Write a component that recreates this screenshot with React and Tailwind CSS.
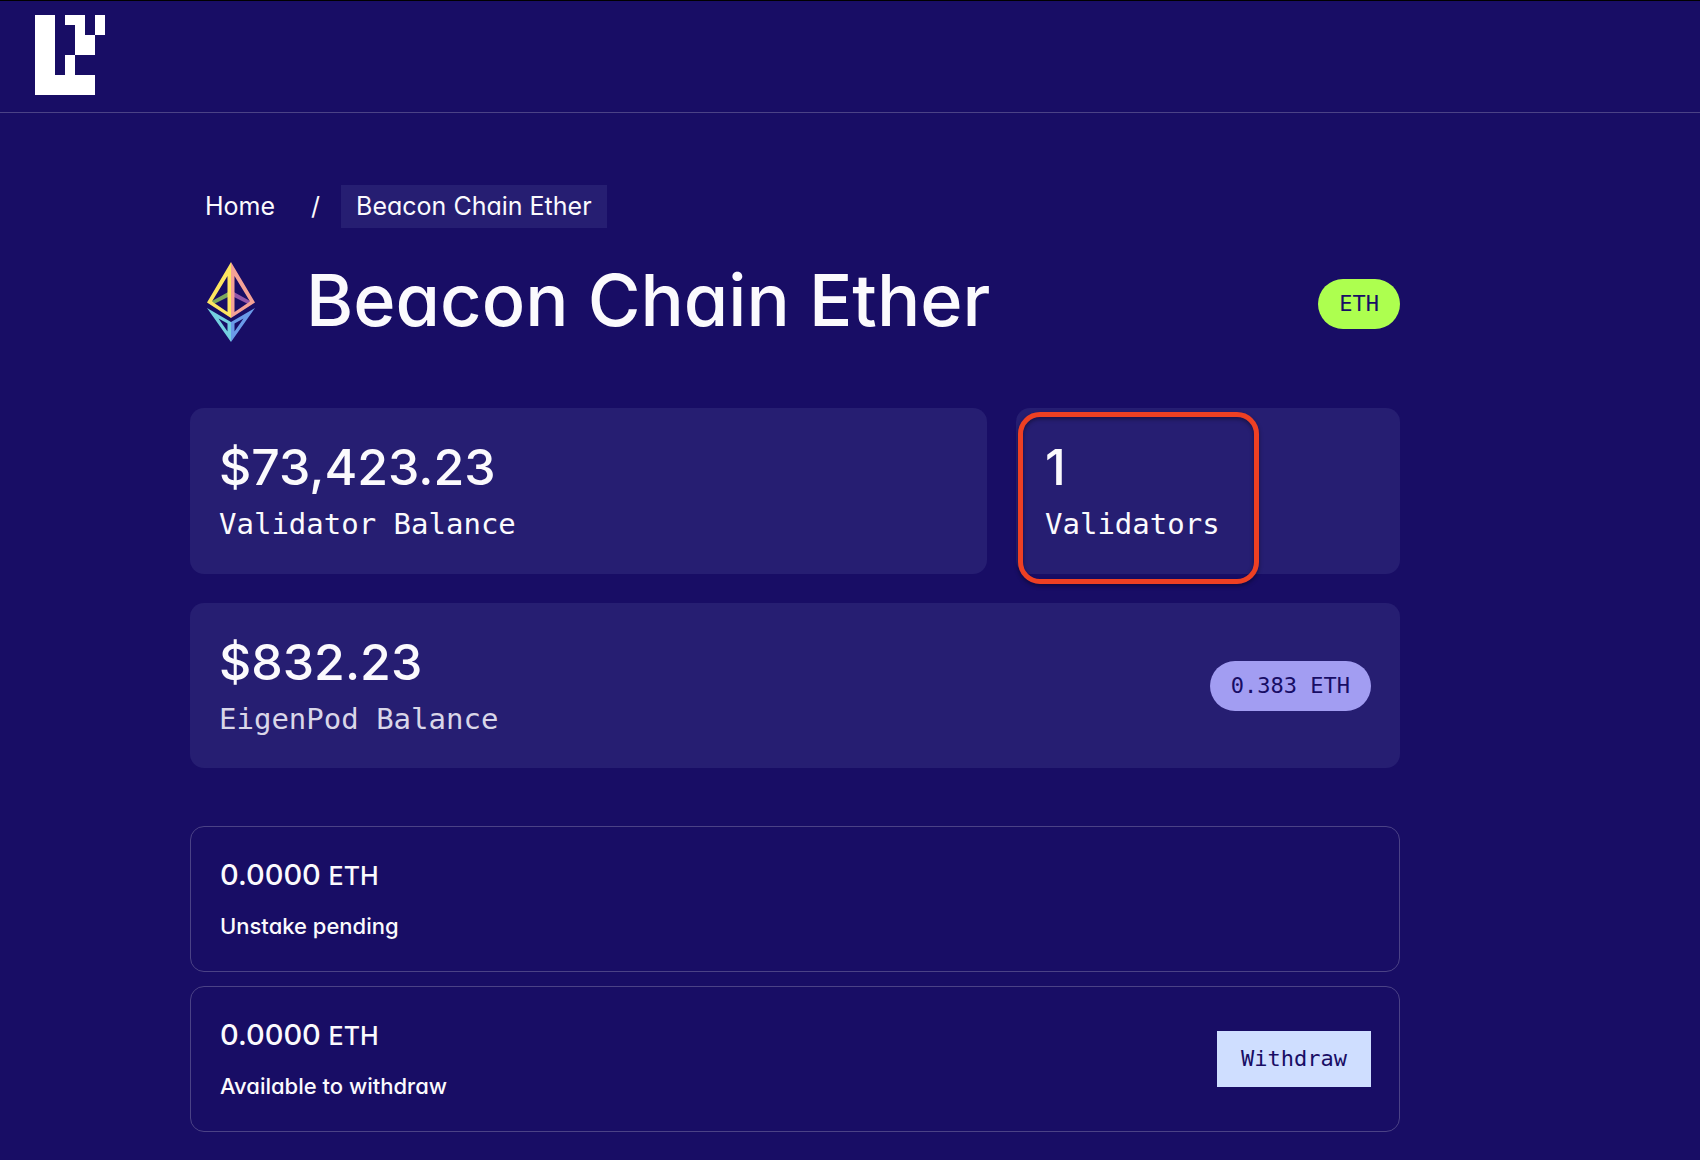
import React from "react";

const mono = "font-['DejaVu_Sans_Mono',monospace]";

function Logo() {
  return (
    <svg viewBox="0 0 7 8" className="h-20 w-[70px]" fill="#ffffff" shapeRendering="crispEdges" aria-hidden="true">
      <path d="M0 0H2V6H3V4H4V6H6V8H0Z" />
      <path d="M3 0H5V2H6V4H4V1H3Z" />
      <path d="M6 0H7V2H6Z" />
    </svg>
  );
}

function EtherIcon() {
  return (
    <svg viewBox="0 0 48 80" className="h-20 w-12 shrink-0" aria-hidden="true">
      <path d="M4 39.500 24 28.500V33.500L7 42Z" fill="#7da85c" />
      <path d="M44 39.500 24 28.500V33.500L41 42Z" fill="#9457a8" />
      <path fillRule="evenodd" d="M24 0 0 40.500 24 56ZM20.500 14V50L5 39.500Z" fill="#fde560" />
      <path fillRule="evenodd" d="M24 0 48 40.500 24 56ZM27.500 14V50L43 39.500Z" fill="#f4a196" />
      <path fillRule="evenodd" d="M0 46 24 60V80ZM11.500 56.500 20.500 69.500V61.500Z" fill="#74cfe0" />
      <path fillRule="evenodd" d="M48 46 24 60V80ZM36.500 56.500 27.500 69.500V61.500Z" fill="#6a9ae8" />
    </svg>
  );
}

function Stat({ value, label, muted }) {
  return (
    <div>
      <p className="text-[50px] leading-[60px] font-medium">{value}</p>
      <p className={`font-['DejaVu_Sans_Mono',monospace] pt-1.5 text-[29px] leading-[42px] ${muted ? "text-[#d9d6e8]" : ""}`}>{label}</p>
    </div>
  );
}

function Amount({ label }) {
  return (
    <div>
      <p className="text-[29px] leading-10 font-medium">
        0.0000 <span className="text-[25px] leading-none">ETH</span>
      </p>
      <p className="mt-3.5 text-[22px] leading-[34px] font-medium">{label}</p>
    </div>
  );
}

export default function App() {
  return (
    <div className="min-h-screen border-t border-black bg-[#180d65] font-['Inter',sans-serif] text-[#fbfafd] [font-feature-settings:'cv11']">
      <header className="border-b border-[#4b4286] px-[35px] pt-3.5 pb-[17px]">
        <a href="#" aria-label="EigenLayer home" className="block w-[70px]">
          <Logo />
        </a>
      </header>

      <main className="pt-[72px] pr-[300px] pb-7 pl-[190px]">
        <nav aria-label="Breadcrumb" className="flex items-center text-[25px] leading-[43px]">
          <a href="#" className="px-[15px]">Home</a>
          <span className="px-[21px]">/</span>
          <a href="#" aria-current="page" className="bg-[#261e72] px-[15px]">Beacon Chain Ether</a>
        </nav>

        <div className="mt-8 flex items-center pl-[17px]">
          <EtherIcon />
          <h1 className="ml-[51px] pb-1 text-[72px] leading-[80px] font-medium">Beacon Chain Ether</h1>
          <span className={`${mono} mt-1 ml-auto rounded-full bg-[#adff4f] px-[21px] text-[22px] leading-[50px] text-[#180d65]`}>ETH</span>
        </div>

        <section className="mt-16 grid grid-cols-12 gap-[29px]">
          <div className="col-span-8 rounded-[14px] bg-[#261e72] p-[29px]">
            <Stat value="$73,423.23" label="Validator Balance" />
          </div>
          <div className="relative col-span-4 rounded-[14px] bg-[#261e72] p-[29px]">
            <Stat value="1" label="Validators" />
            <div className="absolute top-1 left-0.5 h-[172px] w-[241px] rounded-[22px] border-[5px] border-[#ee4023] shadow-[0_2px_4px_rgba(0,0,0,0.4),inset_0_2px_4px_rgba(0,0,0,0.4)]" />
          </div>
          <div className="col-span-12 flex items-center justify-between rounded-[14px] bg-[#261e72] p-[29px] pb-7">
            <Stat value="$832.23" label="EigenPod Balance" muted />
            <span className={`${mono} rounded-full bg-[#a29df2] px-[21px] text-[22px] leading-[50px] text-[#180d65]`}>0.383 ETH</span>
          </div>
        </section>

        <section className="mt-[58px] flex flex-col gap-3.5">
          <div className="rounded-[14px] border border-[#4b4286] p-7 pl-[29px]">
            <Amount label="Unstake pending" />
          </div>
          <div className="flex items-center justify-between rounded-[14px] border border-[#4b4286] p-7 pl-[29px]">
            <Amount label="Available to withdraw" />
            <button type="button" className={`${mono} bg-[#cfdeff] px-6 text-[22px] leading-[56px] text-[#180d65]`}>Withdraw</button>
          </div>
        </section>
      </main>
    </div>
  );
}
